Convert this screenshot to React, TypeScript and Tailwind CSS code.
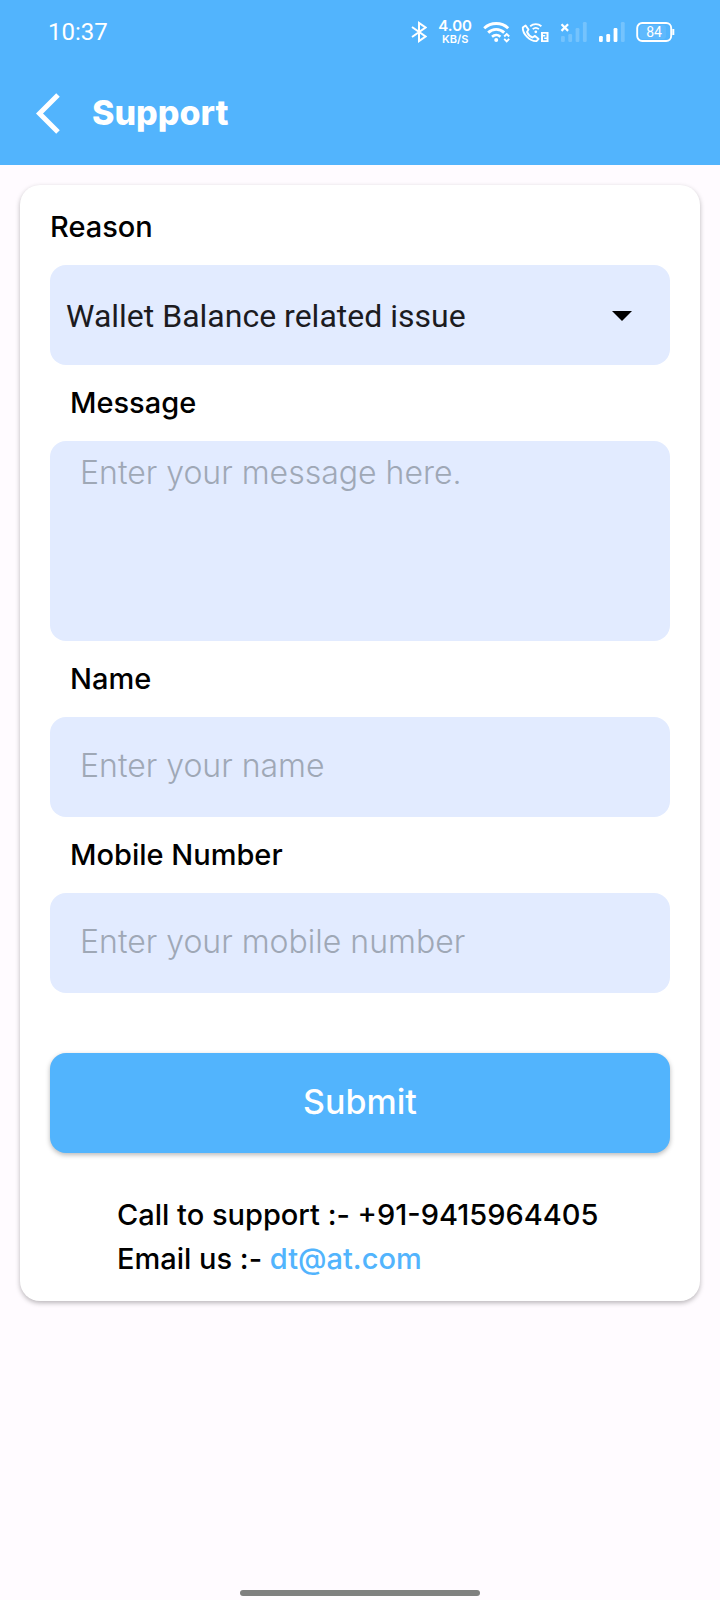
import { useState } from "react";
import type { ReactNode } from "react";

function BluetoothIcon() {
  return (
    <svg viewBox="0 0 16 22" className="h-[22px] w-4" fill="none" stroke="currentColor" strokeWidth="2" aria-hidden="true">
      <path d="M1 6 14.500 15.500 8 20V2l6.500 4.500L1 16" />
    </svg>
  );
}

function WifiIcon() {
  return (
    <svg viewBox="0 0 27 22" className="h-[22px] w-[27px]" fill="none" stroke="currentColor" aria-hidden="true">
      <path d="M1.200 7.200C8 1 18.500 1 25.200 7.200" strokeWidth="2.900" />
      <path d="M5.200 11.600C9.800 7.300 16.600 7.300 21.200 11.600" strokeWidth="2.900" />
      <path d="M9 15.700C11.500 13.500 15 13.500 17.400 15.700" strokeWidth="2.600" />
      <circle cx="13.200" cy="19" r="2" fill="currentColor" stroke="none" />
      <path d="m21.200 15.500 2.500-2.500 2.500 2.500M21.200 17.800l2.500 2.500 2.500-2.500" strokeWidth="1.900" />
    </svg>
  );
}

function WifiCallIcon() {
  return (
    <svg viewBox="0 0 28 22" className="h-[22px] w-[28px]" fill="none" stroke="currentColor" aria-hidden="true">
      <path d="M1.800 6.500 4.600 4.500 7.500 8.600 6 11c1.200 2.700 2.900 4.500 5.500 5.500l2.500-1.600 3.600 3-2.100 2.200C9 20.600 1.500 13 1.800 6.500Z" strokeWidth="1.900" strokeLinejoin="round" />
      <path d="M9.200 5.200c3.200-2.800 8-2.800 11.200 0M11.700 8.100c1.800-1.500 4.400-1.500 6.200 0" strokeWidth="1.800" />
      <circle cx="14.800" cy="10.800" r="1.400" fill="currentColor" stroke="none" />
      <rect x="20" y="11" width="7.500" height="10" fill="currentColor" stroke="none" />
      <path d="M22 13.300h2.900v2.700h-2.300v2.700h3" stroke="#52b4fd" strokeWidth="1.200" />
    </svg>
  );
}

function SignalIcon({ bars, missing = false }: { bars: number; missing?: boolean }) {
  const heights = [6, 8, 14, 20];
  return (
    <svg viewBox="0 0 27 22" className="h-[22px] w-[27px]" fill="currentColor" aria-hidden="true">
      {heights.map((h, i) => (
        <rect key={h} x={1 + i * 7.3} y={21 - h} width="3.800" height={h} rx="1.200" opacity={i < bars ? 1 : 0.2} />
      ))}
      {missing && <path d="m1.500 3.300 6.600 6.600m0-6.600L1.500 9.900" stroke="currentColor" strokeWidth="2.200" />}
    </svg>
  );
}

function BatteryIcon() {
  return (
    <svg viewBox="0 0 39 22" className="h-[22px] w-[39px]" aria-hidden="true">
      <rect x="4" y="4" width="26" height="14" rx="3" fill="currentColor" opacity="0.08" />
      <rect x="1.200" y="2" width="34" height="18" rx="5" fill="none" stroke="currentColor" strokeWidth="1.900" />
      <path d="M37.300 8v6" stroke="currentColor" strokeWidth="2" />
      <text x="18" y="16" textAnchor="middle" fontSize="14" fill="currentColor" className="font-['Roboto',sans-serif]">84</text>
    </svg>
  );
}

function StatusBar() {
  return (
    <div className="flex h-16 items-center justify-between pr-[45px] pl-12 text-white">
      <time className="font-['Roboto',sans-serif] text-[24px] leading-8">10:37</time>
      <div className="flex items-center gap-[11px]">
        <BluetoothIcon />
        <div className="flex flex-col items-center font-['Inter',sans-serif] font-semibold">
          <span className="text-[15px] leading-[14px]">4.00</span>
          <span className="text-[11px] leading-[12px]">KB/S</span>
        </div>
        <WifiIcon />
        <WifiCallIcon />
        <SignalIcon bars={0} missing />
        <SignalIcon bars={3} />
        <BatteryIcon />
      </div>
    </div>
  );
}

const fieldClass =
  "block w-full rounded-2xl bg-[#e2ebff] px-[30px] text-[32px] font-light text-[#1c1b1f] placeholder:text-[#9fa8b6] outline-none";

function Label({ htmlFor, children }: { htmlFor: string; children: ReactNode }) {
  return (
    <label htmlFor={htmlFor} className="block px-5 py-4 text-[29px] leading-[44px] font-medium">
      {children}
    </label>
  );
}

export default function App() {
  const [reason, setReason] = useState("wallet");
  return (
    <div className="flex min-h-screen flex-col bg-[#fffbff] font-['Inter',sans-serif] text-black">
      <header className="bg-[#52b4fd] text-white">
        <StatusBar />
        <div className="flex h-[101px] items-center gap-8 px-9 pb-[3px]">
          <button type="button" aria-label="Back" className="block">
            <svg viewBox="0 0 24 42" className="h-[42px] w-6" fill="none" stroke="currentColor" strokeWidth="5" aria-hidden="true">
              <path d="M22 3 3.500 21.500 22 40" />
            </svg>
          </button>
          <h1 className="text-[34px] leading-[48px] font-extrabold">Support</h1>
        </div>
      </header>

      <main className="flex-1 p-5">
        <form
          onSubmit={(e) => e.preventDefault()}
          className="rounded-[20px] bg-white px-[30px] pb-5 shadow-[0_2px_5px_rgba(0,0,0,0.28)]"
        >
          <label htmlFor="reason" className="block pt-5 pb-4 text-[29px] leading-[44px] font-medium">
            Reason
          </label>
          <div className="relative">
            <select
              id="reason"
              value={reason}
              onChange={(e) => setReason(e.target.value)}
              className="block h-[100px] w-full appearance-none rounded-2xl bg-[#e2ebff] pt-[2px] pr-20 pl-4 font-['Roboto',sans-serif] text-[32px] text-[#1c1b1f] outline-none"
            >
              <option value="wallet">Wallet Balance related issue</option>
            </select>
            <svg viewBox="0 0 20 10" className="pointer-events-none absolute top-[46px] right-[38px] h-[10px] w-5" aria-hidden="true">
              <path d="M0 0h20L10 10Z" />
            </svg>
          </div>

          <Label htmlFor="message">Message</Label>
          <textarea id="message" placeholder="Enter your message here." className={`${fieldClass} h-[200px] resize-none py-[10px] leading-[44px]`} />

          <Label htmlFor="name">Name</Label>
          <input id="name" type="text" placeholder="Enter your name" className={`${fieldClass} h-[100px] pb-[3px]`} />

          <Label htmlFor="mobile">Mobile Number</Label>
          <input id="mobile" type="tel" placeholder="Enter your mobile number" className={`${fieldClass} h-[100px] pb-[3px]`} />

          <button
            type="submit"
            className="mt-[60px] block h-[100px] w-full rounded-2xl bg-[#52b4fd] pb-[3px] text-[34px] font-medium text-white shadow-[0_2px_5px_rgba(0,0,0,0.28)]"
          >
            Submit
          </button>

          <address className="mt-10 px-[67px] text-[29px] leading-[44px] font-medium not-italic">
            <p>Call to support :- +91-9415964405</p>
            <p>
              Email us :- <a href="mailto:dt@at.com" className="text-[#52b4fd]">dt@at.com</a>
            </p>
          </address>
        </form>
      </main>

      <div className="mx-auto mb-1 h-[6px] w-1/3 rounded-full bg-[#808080]" />
    </div>
  );
}
